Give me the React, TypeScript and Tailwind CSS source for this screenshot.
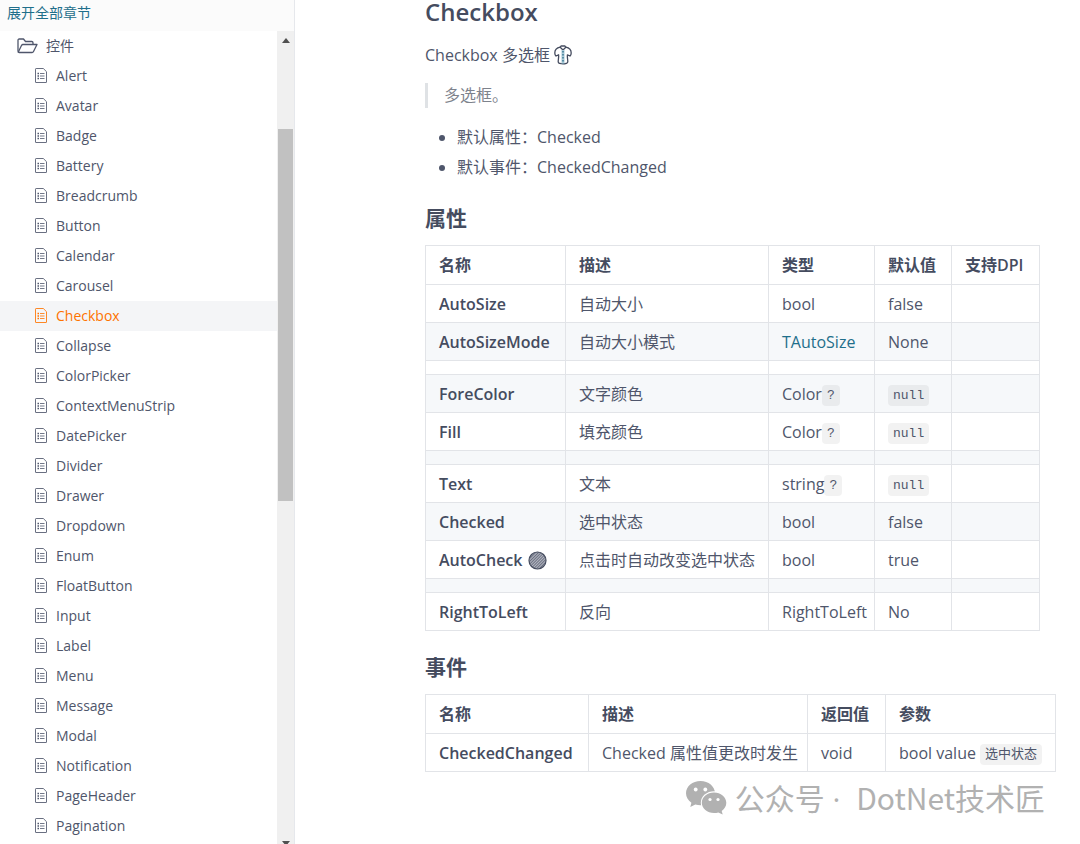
import { useState } from "react";
import type { ReactNode } from "react";

const controls = [
  "Alert",
  "Avatar",
  "Badge",
  "Battery",
  "Breadcrumb",
  "Button",
  "Calendar",
  "Carousel",
  "Checkbox",
  "Collapse",
  "ColorPicker",
  "ContextMenuStrip",
  "DatePicker",
  "Divider",
  "Drawer",
  "Dropdown",
  "Enum",
  "FloatButton",
  "Input",
  "Label",
  "Menu",
  "Message",
  "Modal",
  "Notification",
  "PageHeader",
  "Pagination",
];

const FolderIcon = () => (
  <svg width="21" height="16" viewBox="0 0 21 16" fill="none" stroke="currentColor" strokeWidth="1.3" strokeLinejoin="round">
    <path d="M1 13.5V2.2C1 1.5 1.5 1 2.2 1h4.3l2 2.5h6.3c.7 0 1.2.5 1.2 1.2V6.5" />
    <path d="M1.2 14.2 4.6 7.3c.3-.5.7-.8 1.2-.8H20l-3.6 7.2c-.3.6-.7.8-1.3.8H2.2c-.7 0-1.2-.4-1.2-1" />
  </svg>
);

const FileIcon = () => (
  <svg width="13" height="16" viewBox="0 0 13 16" fill="none" stroke="currentColor">
    <path d="M1.500 1.200c0-.4.2-.7.6-.7h7.200l3.200 3.200v10.600c0 .1-.1.2-.2.2H1.700c-.1 0-.2-.1-.2-.2z" strokeOpacity=".85" />
    <path d="M3.500 5.500H5M3.500 8H5M3.500 10.500H5" strokeWidth="1.3" />
    <path d="M6 5.500h4.500M6 8h4.500M6 10.500h4.500" strokeOpacity=".8" />
  </svg>
);

const ShirtIcon = () => (
  <svg className="inline-block align-[-4px]" width="18" height="20" viewBox="0 0 18 20" fill="none" stroke="#454c5f" strokeWidth="1.3" strokeLinejoin="round">
    <path d="M6.200 2.200C3 2.800.8 5 .8 8c0 1.300.4 2.300 1.200 3l2.600-1.200c.3 2.600-.4 4.600-.4 7 0 .9.5 1.300 1.300 1.500 2.200.6 4.800.6 7 0 .8-.2 1.300-.6 1.300-1.500 0-2.400-.7-4.400-.4-7L16 11c.8-.7 1.200-1.700 1.200-3 0-3-2.200-5.200-5.400-5.800" />
    <path d="M6.200 2.200 7 1h4l.8 1.200L9 5z" />
    <path d="M9 5v13.500" strokeWidth="3" stroke="#a9c9d6" />
    <path d="M9 6v12.500" strokeDasharray="1.500 1.500" stroke="#2d6f8b" />
  </svg>
);

const HatchedCircle = () => (
  <svg className="ml-[6px] inline-block align-[-4px]" width="19" height="19" viewBox="0 0 19 19">
    <defs>
      <pattern id="hatch" width="2" height="2" patternUnits="userSpaceOnUse" patternTransform="rotate(45)">
        <rect width="2" height="2" fill="#b4b7c2" />
        <rect width="1" height="2" fill="#6b7080" />
      </pattern>
    </defs>
    <circle cx="9.500" cy="9.500" r="8.500" fill="url(#hatch)" stroke="#454c5f" strokeWidth="1.200" />
  </svg>
);

const WechatIcon = () => (
  <svg width="41" height="34" viewBox="0 0 41 34" fill="#b1b1b1">
    <path d="M14.500 0C6.500 0 0 5.400 0 12.200c0 3.900 2.100 7.200 5.400 9.500L4.300 26l5-2.600c1.700.5 3.500.8 5.200.8 8 0 14.500-5.300 14.500-12S22.500 0 14.500 0z" />
    <ellipse cx="28" cy="21.700" rx="13.200" ry="11.500" fill="#fff" />
    <path d="M28 11.500c-6.700 0-12.200 4.600-12.200 10.300S21.300 32 28 32c1.500 0 3-.2 4.300-.6l4.400 2.200-1-3.700c2.900-1.900 4.600-4.800 4.600-8.100 0-5.700-5.600-10.300-12.300-10.300z" />
    <g fill="#fff">
      <circle cx="9.700" cy="8.500" r="1.900" />
      <circle cx="19.300" cy="8.500" r="1.900" />
      <circle cx="24" cy="18.500" r="1.600" />
      <circle cx="32" cy="18.500" r="1.600" />
    </g>
  </svg>
);

const Code = ({ children }: { children: ReactNode }) => (
  <code className="rounded bg-black/5 px-[5px] py-[3px] align-[1px] font-['Liberation_Mono','Noto_Sans_CJK_SC',monospace] text-[13px] leading-4">
    {children}
  </code>
);

type Property = {
  name: ReactNode;
  desc: string;
  type: ReactNode;
  value: ReactNode;
};

// null draws the thin empty row between two groups
const properties: (Property | null)[] = [
  { name: "AutoSize", desc: "自动大小", type: "bool", value: "false" },
  {
    name: "AutoSizeMode",
    desc: "自动大小模式",
    type: <a href="#tautosize" className="text-[#1f6f8b]">TAutoSize</a>,
    value: "None",
  },
  null,
  { name: "ForeColor", desc: "文字颜色", type: <>Color<Code>?</Code></>, value: <Code>null</Code> },
  { name: "Fill", desc: "填充颜色", type: <>Color<Code>?</Code></>, value: <Code>null</Code> },
  null,
  { name: "Text", desc: "文本", type: <>string<Code>?</Code></>, value: <Code>null</Code> },
  { name: "Checked", desc: "选中状态", type: "bool", value: "false" },
  { name: <>AutoCheck<HatchedCircle /></>, desc: "点击时自动改变选中状态", type: "bool", value: "true" },
  null,
  { name: "RightToLeft", desc: "反向", type: "RightToLeft", value: "No" },
];

const Th = ({ children }: { children: ReactNode }) => (
  <th className="border border-[#e2e4e8] px-[13px] text-left text-base font-semibold text-[#454c5f]">{children}</th>
);

const Td = ({ children, className = "" }: { children?: ReactNode; className?: string }) => (
  <td className={`whitespace-nowrap border border-[#e2e4e8] px-[13px] ${className}`}>{children}</td>
);

const Sidebar = () => {
  const [active, setActive] = useState("Checkbox");
  return (
    <aside className="flex h-screen w-[295px] shrink-0 flex-col overflow-hidden border-r border-[#e6e8ec] text-sm">
      <div className="h-[31px] shrink-0 bg-[#fbfbfb] px-[7px]">
        <button className="h-[26px] text-[#1f6f8b]">展开全部章节</button>
      </div>
      <div className="flex min-h-0 flex-1">
        <nav className="min-w-0 flex-1 overflow-hidden">
          <div className="flex h-[30px] items-center gap-2 pl-[17px]">
            <FolderIcon />
            控件
          </div>
          {controls.map((name) => (
            <a
              key={name}
              href={`#${name}`}
              onClick={() => setActive(name)}
              className={`flex h-[30px] items-center gap-[9px] pl-[34px] ${
                name === active ? "bg-[#f4f5f7] text-[#fe7300]" : ""
              }`}
            >
              <FileIcon />
              {name}
            </a>
          ))}
        </nav>
        <div className="flex w-[17px] flex-col items-center bg-[#f0f0f0]">
          <svg className="mt-[7px] shrink-0" width="8" height="5" viewBox="0 0 8 5" fill="#505050">
            <path d="M4 0 8 5H0z" />
          </svg>
          <div className="mt-[86px] h-[372px] w-[15px] bg-[#c1c1c1]" />
          <svg className="mt-auto shrink-0" width="8" height="3" viewBox="0 0 8 3" fill="#505050">
            <path d="M0 0h8L5.600 3H2.400z" />
          </svg>
        </div>
      </div>
    </aside>
  );
};

const App = () => {
  return (
    <div className="flex bg-white font-['Open_Sans','Noto_Sans_CJK_SC',sans-serif] text-[#4f566b]">
      <Sidebar />
      <main className="min-w-0 flex-1 pl-[130px] text-base">
        <h1 className="text-2xl/6 font-semibold text-[#454c5f]">Checkbox</h1>
        <p className="mt-[19px] leading-6">
          Checkbox 多选框 <ShirtIcon />
        </p>
        <blockquote className="mt-4 border-l-[3px] border-[#dfe2e5] pl-4 leading-[25px] text-[#7d828c]">
          多选框。
        </blockquote>
        <ul className="mt-[14px] list-disc pl-8 leading-[30px]">
          <li>默认属性：Checked</li>
          <li>默认事件：CheckedChanged</li>
        </ul>
        <h2 className="mt-[22px] text-[21px]/7 font-bold text-[#454c5f]">属性</h2>
        <table className="mt-[13px] w-[615px] table-fixed border-collapse">
          <colgroup>
            <col className="w-[140px]" />
            <col className="w-[203px]" />
            <col className="w-[106px]" />
            <col className="w-[77px]" />
            <col className="w-[88px]" />
          </colgroup>
          <thead>
            <tr className="h-[39px]">
              <Th>名称</Th>
              <Th>描述</Th>
              <Th>类型</Th>
              <Th>默认值</Th>
              <Th>支持DPI</Th>
            </tr>
          </thead>
          <tbody>
            {properties.map((row, i) =>
              row ? (
                <tr key={i} className="h-[38px] even:bg-[#f6f8fa]">
                  <Td className="font-semibold text-[#454c5f]">{row.name}</Td>
                  <Td>{row.desc}</Td>
                  <Td>{row.type}</Td>
                  <Td>{row.value}</Td>
                  <Td />
                </tr>
              ) : (
                <tr key={i} className="h-[14px] even:bg-[#f6f8fa]">
                  <Td />
                  <Td />
                  <Td />
                  <Td />
                  <Td />
                </tr>
              )
            )}
          </tbody>
        </table>
        <h2 className="mt-[22px] text-[21px]/7 font-bold text-[#454c5f]">事件</h2>
        <table className="mt-[13px] w-[631px] table-fixed border-collapse">
          <colgroup>
            <col className="w-[163px]" />
            <col className="w-[219px]" />
            <col className="w-[78px]" />
            <col className="w-[170px]" />
          </colgroup>
          <thead>
            <tr className="h-[39px]">
              <Th>名称</Th>
              <Th>描述</Th>
              <Th>返回值</Th>
              <Th>参数</Th>
            </tr>
          </thead>
          <tbody>
            <tr className="h-[38px]">
              <Td className="font-semibold text-[#454c5f]">CheckedChanged</Td>
              <Td>Checked 属性值更改时发生</Td>
              <Td>void</Td>
              <Td>
                bool value <Code>选中状态</Code>
              </Td>
            </tr>
          </tbody>
        </table>
        <div className="mt-[5px] flex items-center justify-end gap-2 pr-[35px] font-['Noto_Sans_CJK_SC',sans-serif] text-[30px]/10 text-[#b1b1b1]">
          <WechatIcon />
          <p>
            公众号<span className="pr-2 font-['Open_Sans',sans-serif]"> · </span>DotNet技术匠
          </p>
        </div>
      </main>
    </div>
  );
};

export default App;
